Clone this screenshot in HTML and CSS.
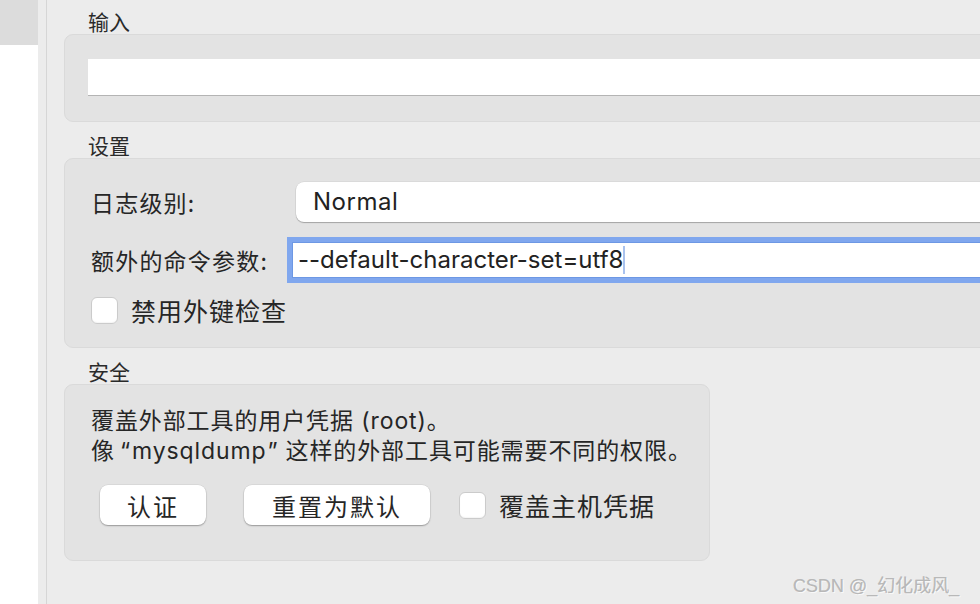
FILE: index.html
```html
<!DOCTYPE html>
<html lang="zh-CN">
<head>
<meta charset="utf-8">
<title>设置</title>
<link rel="stylesheet" href="styles.css">
</head>
<body>
<div class="window">
  <aside class="sidebar">
    <div class="sidebar-selected"></div>
  </aside>
  <div class="splitter"></div>
  <main class="content">
    <div class="section-title">输入</div>
    <div class="group group-input">
      <div class="text-field"></div>
    </div>

    <div class="section-title">设置</div>
    <div class="group group-settings">
      <div class="form-row row-select">
        <div class="form-label">日志级别:</div>
        <div class="select">Normal</div>
      </div>
      <div class="form-row row-args">
        <div class="form-label">额外的命令参数:</div>
        <div class="focused-field"><span>--default-character-set=utf8</span><span class="caret"></span></div>
      </div>
      <label class="check-row">
        <span class="checkbox"></span>
        <span class="check-label">禁用外键检查</span>
      </label>
    </div>

    <div class="section-title">安全</div>
    <div class="group group-security">
      <p class="desc">覆盖外部工具的用户凭据 (root)。<br>像<span class="q q-open">“</span>mysqldump<span class="q q-close">”</span>这样的外部工具可能需要不同的权限。</p>
      <div class="button-row">
        <button class="btn btn-auth">认证</button>
        <button class="btn btn-reset">重置为默认</button>
        <label class="check-row inline">
          <span class="checkbox"></span>
          <span class="check-label">覆盖主机凭据</span>
        </label>
      </div>
    </div>
  </main>
  <div class="watermark">CSDN @_幻化成风_</div>
</div>
</body>
</html>
```
FILE: styles.css
```css
html, body {
  margin: 0;
  padding: 0;
  width: 980px;
  height: 604px;
  overflow: hidden;
  background: #ececec;
}

body {
  font-family: "Inter", "Noto Sans CJK SC", sans-serif;
  color: #262626;
}

.window {
  position: relative;
  display: flex;
  width: 980px;
  height: 604px;
  overflow: hidden;
}

.sidebar {
  width: 38px;
  flex: none;
  background: #ffffff;
}

.sidebar-selected {
  height: 45px;
  background: #dcdcdc;
}

.splitter {
  width: 8px;
  flex: none;
  background: #ececec;
  border-right: 1px solid #d6d6d6;
}

.content {
  flex: none;
  width: 1100px;
  padding: 9px 0 0 17px;
  box-sizing: border-box;
}

.section-title {
  font-family: "Noto Sans CJK SC", sans-serif;
  font-size: 21px;
  line-height: 25px;
  padding-left: 24px;
  color: #2a2a2a;
}

.group {
  background: #e3e3e3;
  border: 1px solid #dadada;
  border-radius: 9px;
  box-sizing: border-box;
  margin-bottom: 11px;
}

.group-input {
  height: 88px;
  padding: 24px 0 0 23px;
}

.text-field {
  height: 37px;
  background: #ffffff;
  border-bottom: 1px solid #b4b4b4;
  box-sizing: border-box;
}

.group-settings {
  height: 190px;
  padding: 23px 0 0 26px;
}

.form-row {
  display: flex;
  align-items: center;
}

.form-label {
  width: 201px;
  flex: none;
  font-family: "Noto Sans CJK SC", sans-serif;
  font-size: 23px;
  letter-spacing: 1.2px;
  color: #262626;
}

.select {
  flex: 1;
  margin-left: 4px;
  height: 40px;
  line-height: 40px;
  background: #ffffff;
  border-radius: 8px 0 0 8px;
  box-shadow: 0 1px 1px rgba(0, 0, 0, 0.25), 0 0 0 0.5px rgba(0, 0, 0, 0.08);
  padding-left: 17px;
  font-size: 24px;
  letter-spacing: 0.5px;
  color: #222;
}

.row-args {
  margin-top: 20px;
}

.focused-field {
  flex: 1;
  height: 36px;
  line-height: 36px;
  background: #ffffff;
  border: 1px solid #6d98e4;
  box-shadow: 0 0 0 5px #80a7ee;
  box-sizing: border-box;
  padding-left: 5px;
  font-size: 24px;
  color: #222;
  display: flex;
  align-items: center;
}

.caret {
  display: inline-block;
  width: 2px;
  height: 28px;
  margin-left: 0;
  background: #a9c2ee;
}

.check-row {
  display: flex;
  align-items: center;
  margin-top: 14px;
}

.checkbox {
  width: 27px;
  height: 27px;
  flex: none;
  box-sizing: border-box;
  background: #ffffff;
  border: 1px solid #cbcbcb;
  border-radius: 6px;
  box-shadow: inset 0 -1px 1px rgba(0, 0, 0, 0.04);
}

.check-label {
  margin-left: 13px;
  font-family: "Noto Sans CJK SC", sans-serif;
  font-size: 25px;
  letter-spacing: 1px;
  color: #262626;
}

.group-security {
  width: 646px;
  height: 177px;
  padding: 21px 0 0 26px;
}

.desc {
  margin: 0;
  font-family: "Inter", "Noto Sans CJK SC", sans-serif;
  font-size: 23px;
  line-height: 30px;
  letter-spacing: 0.9px;
  color: #262626;
}

.desc .q-open {
  margin: 0 1px 0 5px;
}

.desc .q-close {
  margin: 0 7px 0 1px;
}

.button-row {
  display: flex;
  align-items: center;
  margin-top: 19px;
  padding-left: 9px;
}

.btn {
  height: 40px;
  border: none;
  background: #ffffff;
  border-radius: 8px;
  box-shadow: 0 1px 1.5px rgba(0, 0, 0, 0.3), 0 0 0 0.5px rgba(0, 0, 0, 0.08);
  font-family: "Noto Sans CJK SC", sans-serif;
  font-size: 24px;
  color: #262626;
  padding: 0;
}

.btn-auth {
  width: 106px;
  letter-spacing: 2px;
}

.btn-reset {
  width: 186px;
  margin-left: 38px;
  letter-spacing: 2px;
}

.check-row.inline {
  margin-top: 0;
  margin-left: 29px;
}

.check-row.inline .check-label {
  margin-left: 13px;
}

.watermark {
  position: absolute;
  left: 793px;
  top: 571px;
  font-family: "Liberation Sans", "Noto Sans CJK SC", sans-serif;
  font-size: 18px;
  color: #b8b8b8;
  text-shadow: 1px 1px 0 rgba(255, 255, 255, 0.7), -0.5px -0.5px 0 rgba(0, 0, 0, 0.15);
}
```
